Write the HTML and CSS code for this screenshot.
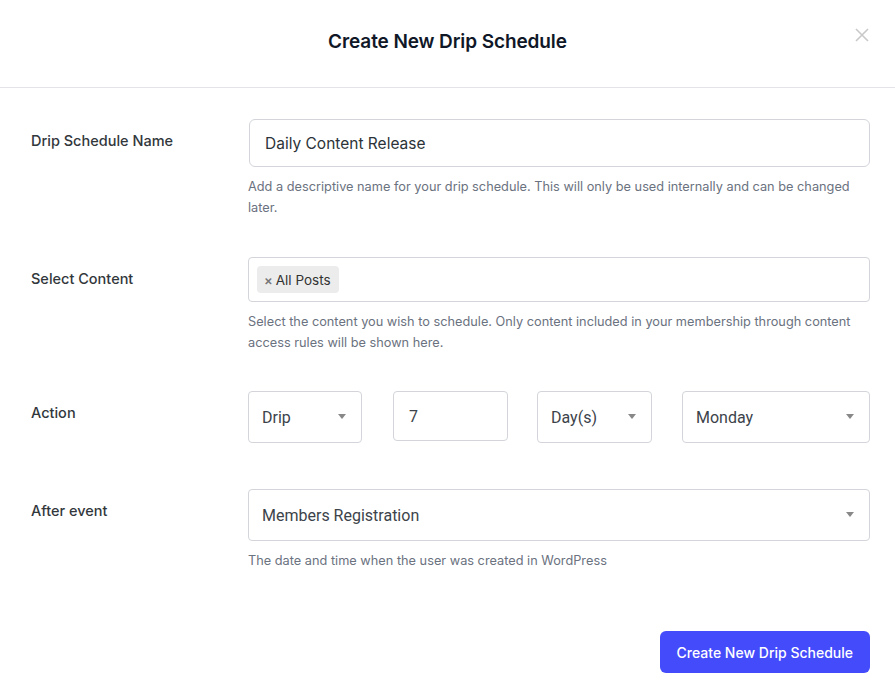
FILE: index.html
```html
<!DOCTYPE html>
<html lang="en">
<head>
<meta charset="utf-8">
<title>Create New Drip Schedule</title>
<link rel="stylesheet" href="styles.css">
</head>
<body>
<div class="modal">
  <header class="modal-header">
    <h1 class="modal-title">Create New Drip Schedule</h1>
    <button class="close" aria-label="Close">
      <svg width="16" height="16" viewBox="0 0 16 16"><path d="M2 2L14 14M14 2L2 14" stroke="#c9c9c9" stroke-width="1.6" fill="none"/></svg>
    </button>
  </header>
  <form class="form">
    <div class="row row-name">
      <label class="label">Drip Schedule Name</label>
      <div class="field">
        <div class="input input-name">Daily Content Release</div>
        <p class="help">Add a descriptive name for your drip schedule. This will only be used internally and can be changed later.</p>
      </div>
    </div>
    <div class="row row-content">
      <label class="label">Select Content</label>
      <div class="field">
        <div class="multiselect"><span class="tag"><span class="tag-x">×</span>All Posts</span></div>
        <p class="help">Select the content you wish to schedule. Only content included in your membership through content access rules will be shown here.</p>
      </div>
    </div>
    <div class="row row-action">
      <label class="label">Action</label>
      <div class="field action-fields">
        <div class="select s-drip">Drip<span class="arrow"></span></div>
        <div class="select s-num">7</div>
        <div class="select s-days">Day(s)<span class="arrow"></span></div>
        <div class="select s-day">Monday<span class="arrow"></span></div>
      </div>
    </div>
    <div class="row row-event">
      <label class="label">After event</label>
      <div class="field">
        <div class="select s-event">Members Registration<span class="arrow"></span></div>
        <p class="help">The date and time when the user was created in WordPress</p>
      </div>
    </div>
    <div class="footer">
      <button type="button" class="btn-primary">Create New Drip Schedule</button>
    </div>
  </form>
</div>
</body>
</html>
```

FILE: styles.css
```css
* { box-sizing: border-box; }
html, body { margin: 0; padding: 0; background: #fff; }
body { font-family: Inter, "Noto Sans", sans-serif; color: #2c3338; }

.modal { width: 895px; }

.modal-header {
  height: 88px;
  border-bottom: 1px solid #e2e4e7;
  display: flex;
  align-items: center;
  justify-content: center;
  position: relative;
}
.modal-title {
  margin: 0 0 4px;
  font-size: 19px;
  font-weight: 600;
  color: #101828;
  letter-spacing: -0.1px;
}
.close {
  position: absolute;
  right: 25px;
  top: 27px;
  width: 16px;
  height: 16px;
  padding: 0;
  border: 0;
  background: none;
  line-height: 0;
}

.form { padding: 31px 25px 0 31px; }

.row {
  display: grid;
  grid-template-columns: 217px 1fr;
}
.row-name { margin-bottom: 39px; }
.row-content { margin-bottom: 38px; }
.row-action { margin-bottom: 46px; }

.label {
  font-size: 14.5px;
  font-weight: 500;
  line-height: 20px;
  padding-top: 12px;
  color: #32373c;
}

.help {
  margin: 9px 0 0;
  font-size: 12.75px;
  line-height: 21px;
  color: #6b7280;
}

.input-name {
  margin-left: 1px;
  height: 48px;
  border: 1px solid #d3d5da;
  border-radius: 6px;
  display: flex;
  align-items: center;
  padding-left: 15px;
  font-size: 15.5px;
  color: #2c3338;
}

.multiselect {
  height: 45px;
  border: 1px solid #d3d5da;
  border-radius: 4px;
  padding: 8px;
  display: flex;
  align-items: center;
}
.tag {
  display: inline-flex;
  align-items: center;
  height: 27px;
  padding: 0 8px 0 7px;
  background: #ececec;
  border-radius: 4px;
  font-size: 13.5px;
  color: #333;
}
.tag-x { font-size: 13px; color: #777; margin-right: 3px; font-weight: 600; }

.action-fields {
  display: flex;
  gap: 30px;
  align-items: flex-start;
}

.select {
  position: relative;
  height: 52px;
  border: 1px solid #d3d5da;
  border-radius: 4px;
  display: flex;
  align-items: center;
  padding-left: 13px;
  padding-top: 1px;
  font-family: Roboto, "Noto Sans", sans-serif;
  font-size: 16px;
  color: #3c434a;
}
.s-drip { width: 114px; }
.s-num { width: 115px; height: 50px; padding-left: 15px; margin-left: 1px; margin-right: -1px; }
.s-days { width: 115px; }
.s-day { width: 188px; }
.s-event { width: 100%; }

.arrow {
  position: absolute;
  right: 15px;
  top: 22px;
  width: 0;
  height: 0;
  border-left: 4px solid transparent;
  border-right: 4px solid transparent;
  border-top: 5px solid #888;
}

.footer {
  display: flex;
  justify-content: flex-end;
  padding-top: 60px;
}
.btn-primary {
  height: 42px;
  padding: 0 17px;
  background: #444bfa;
  color: #fff;
  border: 0;
  border-radius: 6px;
  font-family: Inter, "Noto Sans", sans-serif;
  font-size: 14px;
  font-weight: 500;
}
```
